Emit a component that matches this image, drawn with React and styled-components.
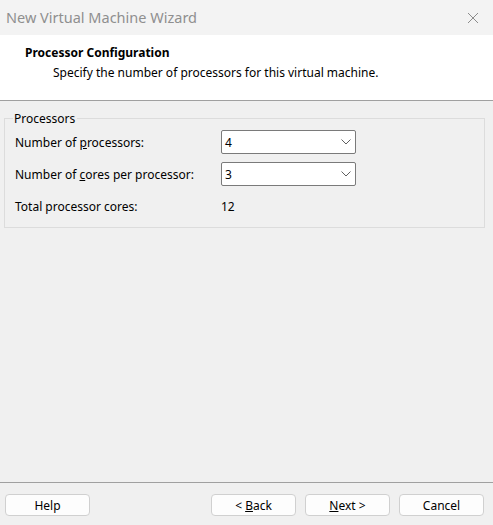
import React from "react";
import styled, { createGlobalStyle } from "styled-components";

const GlobalStyle = createGlobalStyle`
  html, body {
    margin: 0;
    padding: 0;
    background: #f0f0f0;
  }
  body {
    font-family: "Noto Sans", "Open Sans", sans-serif;
    font-size: 12px;
    color: #000;
  }
`;

const rows = [
  { label: ["Number of ", "p", "rocessors:"], value: "4" },
  { label: ["Number of ", "c", "ores per processor:"], value: "3" },
];

const Chevron = () => (
  <svg width="10" height="6" viewBox="0 0 10 6">
    <path d="M0.5 0.5 L5 5 L9.5 0.5" fill="none" stroke="#606060" strokeWidth="1" />
  </svg>
);

const CloseIcon = () => (
  <svg width="12" height="12" viewBox="0 0 12 12">
    <path d="M1 1 L11 11 M11 1 L1 11" fill="none" stroke="#8c8c8c" strokeWidth="1" />
  </svg>
);

const App = () => {
  return (
    <DivWindow>
      <GlobalStyle />
      <DivTitleBar>
        <SpanTitle>New Virtual Machine Wizard</SpanTitle>
        <DivClose>
          <CloseIcon />
        </DivClose>
      </DivTitleBar>
      <DivHeader>
        <PHeading>Processor Configuration</PHeading>
        <PSubheading>Specify the number of processors for this virtual machine.</PSubheading>
      </DivHeader>
      <DivContent>
        <FieldsetGroup>
          <LegendGroup>Processors</LegendGroup>
          <DivRows>
            {rows.map((row, i) => (
              <DivRow key={i}>
                <SpanLabel>
                  {row.label[0]}
                  <U>{row.label[1]}</U>
                  {row.label[2]}
                </SpanLabel>
                <DivCombo>
                  <span>{row.value}</span>
                  <Chevron />
                </DivCombo>
              </DivRow>
            ))}
            <DivRow>
              <SpanLabel>Total processor cores:</SpanLabel>
              <SpanValue>12</SpanValue>
            </DivRow>
          </DivRows>
        </FieldsetGroup>
      </DivContent>
      <DivFooter>
        <Button>Help</Button>
        <DivButtonGroup>
          <Button>
            &lt; <U>B</U>ack
          </Button>
          <Button>
            <U>N</U>ext &gt;
          </Button>
          <Button>Cancel</Button>
        </DivButtonGroup>
      </DivFooter>
    </DivWindow>
  );
};

export default App;

const DivWindow = styled.div`
  display: flex;
  flex-direction: column;
  width: 493px;
  height: 525px;
  background: #f0f0f0;
  overflow: hidden;
`;

const DivTitleBar = styled.div`
  display: flex;
  align-items: center;
  justify-content: space-between;
  height: 35px;
  padding: 0 14px 0 6px;
  box-sizing: border-box;
  background: #f3f3f3;
`;

const SpanTitle = styled.span`
  font-size: 14.5px;
  color: #8f8f8f;
  margin-top: -1px;
`;

const DivClose = styled.div`
  display: flex;
  align-items: center;
`;

const DivHeader = styled.div`
  height: 66px;
  padding: 9px 0 0 25px;
  box-sizing: border-box;
  background: #fff;
  border-bottom: 1px solid #a0a0a0;
`;

const PHeading = styled.p`
  margin: 0;
  font-weight: bold;
  line-height: 17px;
`;

const PSubheading = styled.p`
  margin: 3px 0 0 28px;
  line-height: 17px;
`;

const DivContent = styled.div`
  flex: 1;
  padding: 10px 8px 0 4px;
  border-bottom: 1px solid #a0a0a0;
`;

const FieldsetGroup = styled.fieldset`
  margin: 0;
  padding: 0 0 9px 10px;
  border: 1px solid #dcdcdc;
  border-radius: 0;
  min-inline-size: 0;
`;

const LegendGroup = styled.legend`
  padding: 0 2px 0 1px;
  margin-left: -2px;
  line-height: 15px;
`;

const DivRows = styled.div`
  display: flex;
  flex-direction: column;
  gap: 8px;
  padding-top: 4px;
`;

const DivRow = styled.div`
  display: flex;
  align-items: center;
  height: 24px;
`;

const SpanLabel = styled.span`
  width: 206px;
`;

const U = styled.span`
  text-decoration: underline;
`;

const DivCombo = styled.div`
  display: flex;
  align-items: center;
  justify-content: space-between;
  width: 135px;
  height: 24px;
  box-sizing: border-box;
  padding: 0 4px 0 3px;
  background: #fff;
  border: 1px solid #7a7a7a;
  border-radius: 2px;
`;

const SpanValue = styled.span``;

const DivFooter = styled.div`
  display: flex;
  justify-content: space-between;
  align-items: flex-start;
  height: 42px;
  padding: 11px 9px 0 5px;
  box-sizing: border-box;
`;

const DivButtonGroup = styled.div`
  display: flex;
  gap: 9px;
`;

const Button = styled.button`
  width: 85px;
  height: 22px;
  padding: 0;
  font-family: inherit;
  font-size: 12px;
  color: #000;
  background: #fdfdfd;
  border: 1px solid #d0d0d0;
  border-radius: 4px;
`;
